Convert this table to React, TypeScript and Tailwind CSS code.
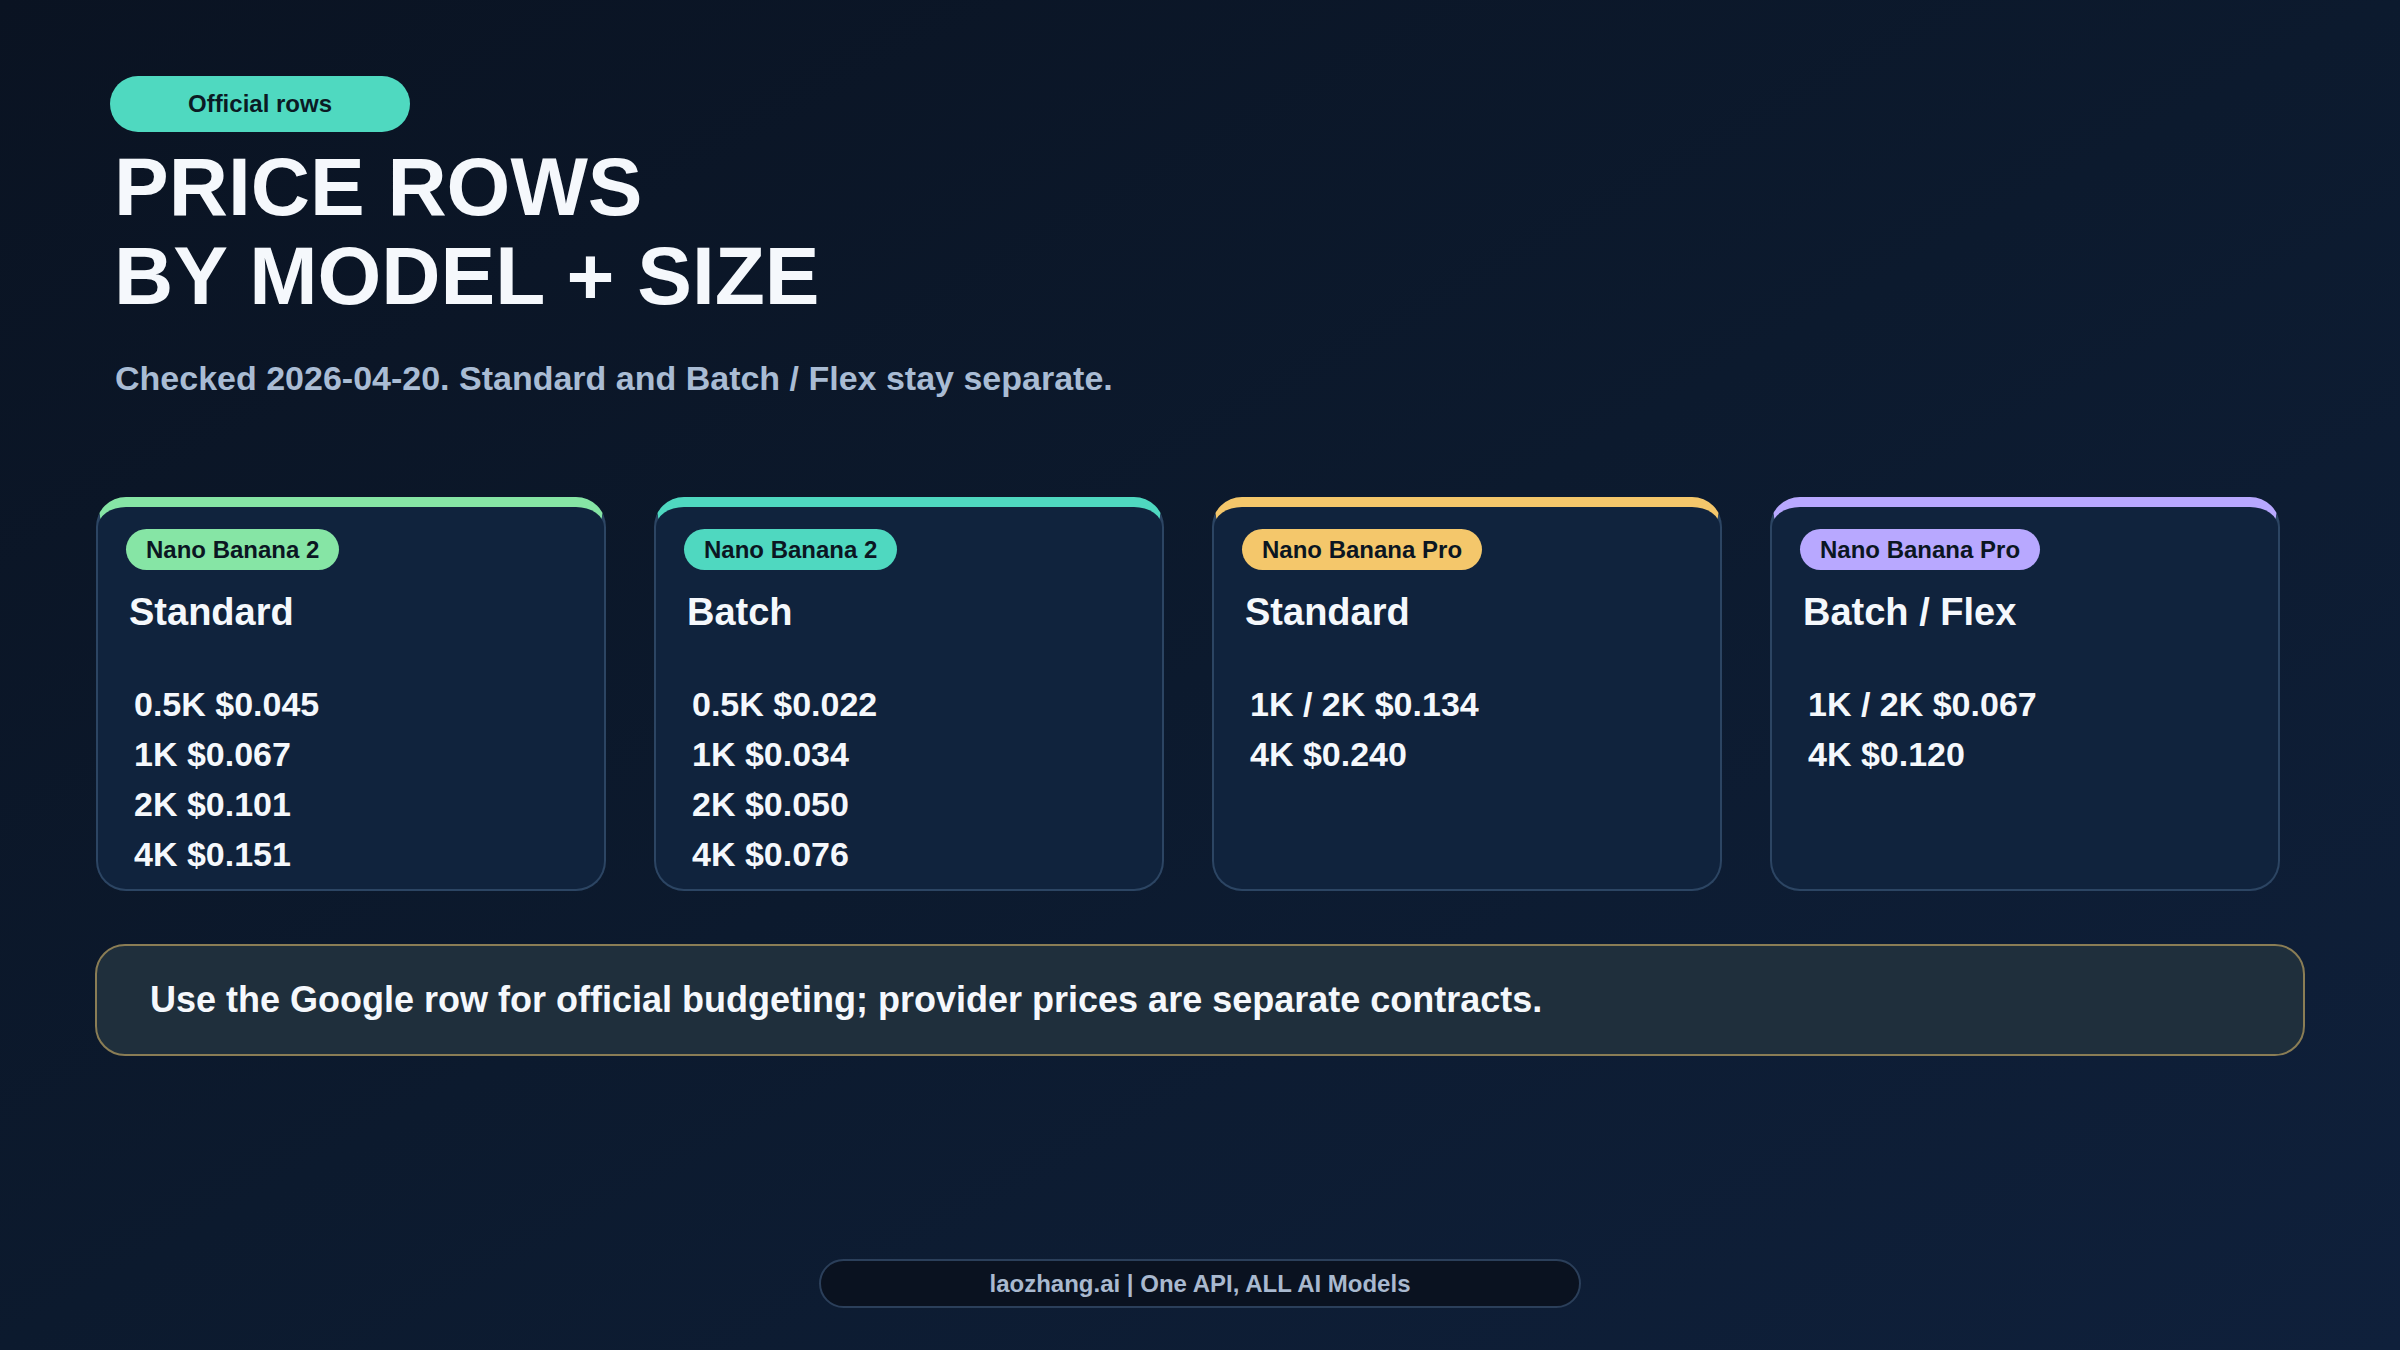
const cards = [
  {
    model: 'Nano Banana 2',
    mode: 'Standard',
    bar: 'border-t-[#86e5a5]',
    badge: 'bg-[#86e5a5]',
    rows: ['0.5K $0.045', '1K $0.067', '2K $0.101', '4K $0.151'],
  },
  {
    model: 'Nano Banana 2',
    mode: 'Batch',
    bar: 'border-t-[#4fd8c0]',
    badge: 'bg-[#4fd8c0]',
    rows: ['0.5K $0.022', '1K $0.034', '2K $0.050', '4K $0.076'],
  },
  {
    model: 'Nano Banana Pro',
    mode: 'Standard',
    bar: 'border-t-[#f4c76b]',
    badge: 'bg-[#f4c76b]',
    rows: ['1K / 2K $0.134', '4K $0.240'],
  },
  {
    model: 'Nano Banana Pro',
    mode: 'Batch / Flex',
    bar: 'border-t-[#b8a8ff]',
    badge: 'bg-[#b8a8ff]',
    rows: ['1K / 2K $0.067', '4K $0.120'],
  },
];

export default function App() {
  return (
    <div className="w-[2400px] h-[1350px] overflow-hidden bg-gradient-to-br from-[#0a1322] via-[#0c1a2e] to-[#0f203b] font-['Liberation_Sans',Arial,sans-serif] font-bold">
      <div className="px-[95px] pt-[76px] flex flex-col">
        {/* Header */}
        <div className="ml-[15px]">
          <div className="w-[300px] h-[56px] rounded-full bg-[#4fd9c0] flex items-center justify-center text-[24px] text-[#0b1a24]">
            Official rows
          </div>
          <h1 className="mt-[10px] ml-[4px] text-[82px] leading-[89px] text-[#f5f8fc]">
            PRICE ROWS
            <br />
            BY MODEL + SIZE
          </h1>
          <p className="mt-[38px] ml-[5px] text-[34px] leading-[40px] text-[#a9bcd4]">
            Checked 2026-04-20. Standard and Batch / Flex stay separate.
          </p>
        </div>

        {/* Price cards */}
        <div className="mt-[99px] ml-px w-[2184px] grid grid-cols-4 gap-[48px]">
          {cards.map((c, i) => (
            <div
              key={i}
              className={`h-[394px] rounded-[30px] border-2 border-t-[10px] border-[#2c4563] ${c.bar} bg-[#10233d] px-[28px] pt-[22px]`}
            >
              <span
                className={`inline-flex h-[41px] items-center rounded-full px-[20px] text-[24px] text-[#0b1622] ${c.badge}`}
              >
                {c.model}
              </span>
              <h2 className="mt-[20px] pl-[3px] text-[38px] leading-[44px] text-[#f5f8fc]">{c.mode}</h2>
              <div className="mt-[45px] pl-[8px] text-[34px] leading-[50px] text-[#f5f8fc]">
                {c.rows.map((r) => (
                  <div key={r}>{r}</div>
                ))}
              </div>
            </div>
          ))}
        </div>

        {/* Note banner */}
        <div className="mt-[53px] h-[112px] rounded-[30px] border-2 border-[#8a7d55] bg-[#1f2f3c] flex items-center px-[53px] text-[36px] text-[#f5f8fc]">
          Use the Google row for official budgeting; provider prices are separate contracts.
        </div>

        {/* Footer */}
        <div className="mt-[203px] self-center w-[762px] h-[49px] rounded-full border-2 border-[#2b3f5a] bg-[#0a1220] flex items-center justify-center text-[24px] text-[#a9b9cf]">
          laozhang.ai | One API, ALL AI Models
        </div>
      </div>
    </div>
  );
}
